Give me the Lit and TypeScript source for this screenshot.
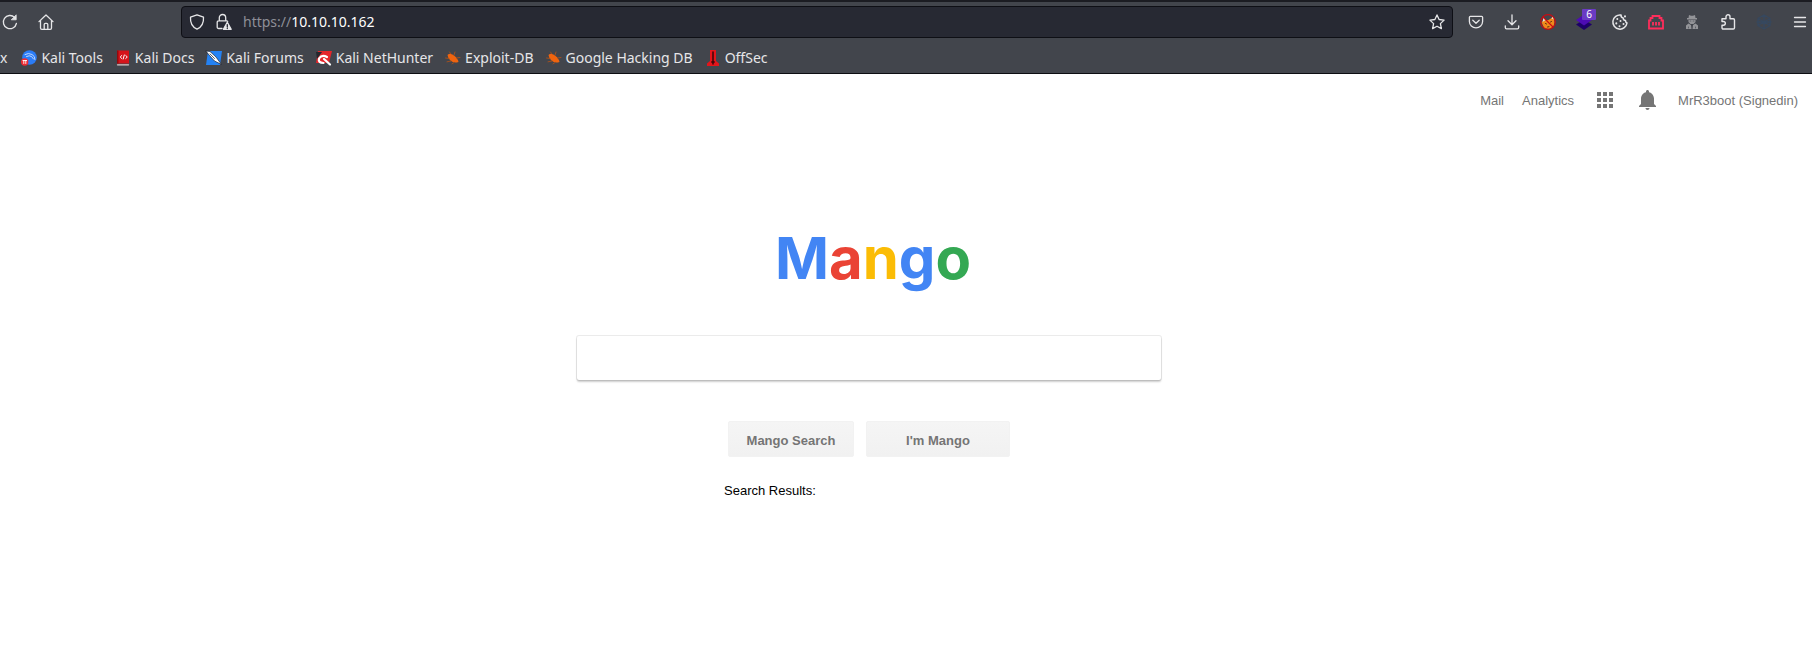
import { LitElement, html, css, svg } from "lit";
import { customElement } from "lit/decorators.js";

const icon = (body: unknown, size = 16) => html`
  <svg width=${size} height=${size} viewBox="0 0 16 16" fill="none" stroke="currentColor"
    stroke-width="1.3" stroke-linecap="round" stroke-linejoin="round" aria-hidden="true">${body}</svg>`;

const reload = svg`<path d="M12.600 3.400A6.600 6.600 0 1 0 14.400 9.500"/><path d="M14.200 1.200v4.600H9.600z" fill="currentColor" stroke-width=".8"/>`;
const home = svg`<path d="M1 7.6 8 1l7 6.6M2.5 6.4V14q0 1.300 1.300 1.300h8.400q1.300 0 1.300-1.300V6.400M6.200 15v-4.400q0-1.200 1.200-1.200h1.200q1.200 0 1.200 1.200V15"/>`;
const shield = svg`<path d="M8 .8 14.500 3.200c.4 5.600-1.600 9.600-6.500 12C3.100 12.800 1.100 8.800 1.500 3.200z"/>`;
const lock = svg`
  <path d="M3.300 6.800V3.700a3.200 3.200 0 0 1 6.400 0v3.100M6 14.500H2.700q-1.500 0-1.500-1.500V8.300q0-1.500 1.500-1.500h7.800q.8 0 1.200.5"/>
  <path d="M11.300 8.300 15.200 15.300H7.400z" fill="currentColor"/><path d="M11.300 10.600v2.200M11.300 14.200v.3" stroke="#272933"/>`;
const star = svg`<path d="m8 .9 2.100 4.600 5 .6-3.700 3.500 1 5L8 12.200 3.600 14.600l1-5L.9 6.100l5-.6z"/>`;
const pocket = svg`<path d="M2.400 2.300h11.200q1 0 1 1v4.200a6.600 6.300 0 0 1-13.200 0V3.300q0-1 1-1zM4.800 6.300 8 9.300l3.200-3"/>`;
const download = svg`<path d="M8 .8v9.700M4 6.700l4 4 4-4M1.300 11.800v1.700q0 1.300 1.300 1.300h10.800q1.300 0 1.300-1.300v-1.700"/>`;
const fox = svg`
  <path d="m1.500 8 3-1.500 4-.5 4.500-3 1.500 5-1 4.500-4 2.500-5-.5-1.500-3z" fill="#f08a1c" stroke="none"/>
  <path d="M3.500 3.500 6 6 2.500 8zM12.500 2.500l1.500 3-2.500-1z" fill="#f4e3cf" stroke="none"/>
  <path d="m5.500 9.500 1 .5M10.500 8l1-.5M7.500 13l1.500-.3" stroke="#5b2d12" stroke-width="1"/>
  <circle cx="8" cy="8" r="7.300" stroke="#c90b12" stroke-width="1.200"/><path d="m3 3 10 10" stroke="#c90b12" stroke-width="1.200"/>`;
const layers = svg`
  <path d="M0 10.500 8 5.500l8 5L8 16z" fill="#1d0069" stroke="none"/>
  <path d="M0 6 8 .5 16 6l-8 5.500z" fill="#4d0cb4" stroke="none"/>`;
const cookie = svg`
  <path d="M9 1A7.100 7.100 0 1 0 15 9M9 1q-.2 2.600 2.200 2.900-.1 2.500 2.300 2.700.1 1.900 1.500 2.400" stroke-width="1.500"/>
  <path d="M13 2.300v.1M5.300 5v.1M8.500 7v.1M4.300 9.300v.1M7.500 12.200v.1M11.500 10v.1" stroke-width="2"/>`;
const dome = svg`
  <path d="M1 14.500V6.500h1.500V4H4.500V2h7v2h2v2.500H15v8z" stroke="#ff2d5b" stroke-width="1.800" stroke-linejoin="miter"/>
  <path d="M5 8v3.500M8 8v3.500M11 8v3.500" stroke="#ff2d5b" stroke-width="1.800" stroke-linecap="butt"/>`;
const spy = svg`
  <g fill="#939498" stroke="none"><path d="M5 1l2 .8h2L11 1l.5 3H13v1.500H3V4h1.500z"/>
  <path d="M4.500 6h7v2L9.500 10h-3l-2-2zM4.500 9.500 7 11l.5 4H2v-3.500zM11.500 9.500 9 11l-.5 4H14v-3.500z"/></g>
  <path d="M6 7h.9M9.100 7h.9M4.500 13v1M11.500 13v1" stroke="#5a5c63" stroke-width=".9"/>`;
const puzzle = svg`<path d="M2 7.500V4.700h4V2.800a2 2 0 0 1 4 0v1.900h3.300q1.200 0 1.200 1.200v7.900q0 1.200-1.200 1.200H3.200Q2 15 2 13.800v-2.600h1.500a1.850 1.850 0 0 0 0-3.700z" stroke-width="1.400"/>`;
const globe = svg`
  <g stroke="#36485f"><path d="m8 1 6 3.500v7L8 15l-6-3.500v-7zM2 4.500l6 3.500 6-3.500M8 8v7M2 11.500 8 8l6 3.500M8 1v7M1 8h14"/></g>`;
const menu = svg`<path d="M2.500 3.500h11M2.500 8h11M2.500 12.500h11"/>`;

const tools = svg`
  <circle cx="8.500" cy="7.500" r="7.300" fill="#2b7cf6" stroke="none"/>
  <path d="M4 4.500q3.500-2 7 0 3 1.500 3 5M5.500 6.500q3-1.500 5 0l2 2.500" stroke="#cfe0ff" stroke-width=".9"/>
  <circle cx="3.700" cy="12" r="3.700" fill="#ee2b33" stroke="none"/><path d="M2.800 10.500v3M4.800 10.500v3M2 10.500h3.600" stroke="#fff" stroke-width=".9"/>`;
const docs = svg`
  <path d="M2 .5h12v13H2z" fill="#d5141b" stroke="none"/><path d="M2 .5h1.500v13H2z" fill="#96080d" stroke="none"/>
  <path d="M2.500 14.800h11" stroke="#dcc9c9"/><path d="M6.800 5.500 5.200 7l1.600 1.500M10.700 5.500 12.300 7l-1.600 1.500M9.300 5 8.200 9" stroke="#fff" stroke-width="1"/>`;
const forums = svg`
  <path d="M2 1h14l-2 14H0z" fill="#2482f4" stroke="none"/>
  <path d="m0 1 4 .5L10 7l5.500 7.500L8.500 11 4 6z" fill="#fff" stroke="#1c2230" stroke-width=".7"/><path d="m4 4 4.500 4.500" stroke="#303540" stroke-width=".8"/>`;
const nethunter = svg`
  <path d="M2 1h14l-3 12H0z" fill="#e5252a" stroke="none"/><path d="M0 2h6L1 9z" fill="#25272d" stroke="none"/>
  <path d="M11 7Q6 4 3 8.500q-1 4.500 4.500 4.500M8 9l6 5.500" stroke="#fff" stroke-width="2.200"/>`;
const bug = svg`
  <path d="M2.500 5Q5 2.500 9 5.500q4 3 4.500 6.500-5 1.500-8-1.500T2.500 5z" fill="#f0640f" stroke="none"/>
  <path d="m6 4-1.500-2M9 5l1-3M11.500 8l3.500-.5M4 8.500.5 8M6 11l-4 .8M9 12.500l-2 1.300" stroke="#a8501c" stroke-width=".9"/>`;
const tower = svg`
  <path d="M5 0h6v11l3 2.500V16H2v-2.500L5 11z" fill="#e3151b" stroke="none"/>
  <path d="M8 2v12M6.800 12h2.400" stroke="#3b0608" stroke-width="1.500"/>`;

const bookmarks: [unknown, string][] = [
  [tools, "Kali Tools"],
  [docs, "Kali Docs"],
  [forums, "Kali Forums"],
  [nethunter, "Kali NetHunter"],
  [bug, "Exploit-DB"],
  [bug, "Google Hacking DB"],
  [tower, "OffSec"],
];

@customElement("browser-chrome")
export class BrowserChrome extends LitElement {
  static styles = css`
    :host { display: block; background: #42454c; color: #e6e6e8; border-top: 2px solid #1b1c22;
      border-bottom: 1px solid #0c0d12; font: 14px/20px "Noto Sans", sans-serif; }
    button { all: unset; box-sizing: border-box; display: flex; align-items: center; justify-content: center; }
    svg { display: block; flex: none; overflow: visible; }
    .bar { display: flex; align-items: center; height: 40px; }
    .nav { display: flex; gap: 20px; flex: 1 1 181px; max-width: 181px; padding-left: 2px; box-sizing: border-box; }
    .address { flex: 1; display: flex; align-items: center; height: 32px; box-sizing: border-box;
      padding: 0 7px; background: #272933; border: 1px solid #0e0f15; border-radius: 4px; }
    .trust { display: flex; gap: 11px; margin-right: 11px; }
    .url { flex: 1; display: flex; }
    .url input { all: unset; width: 100%; height: 20px; color: #fff; }
    .scheme { color: #8e8f97; }
    .actions { display: flex; margin-left: 5px; }
    .actions button { width: 36px; height: 36px; position: relative; }
    .actions button:last-child { width: 30px; padding-left: 6px; }
    .badge { position: absolute; top: 5px; right: 6px; width: 14px; height: 11px; border-radius: 1px;
      background: #6a3bc4; color: #fff; font-size: 10px; line-height: 11px; text-align: center; }
    .marks { display: flex; gap: 12px; height: 31px; align-items: center; }
    .marks a { display: flex; align-items: center; gap: 4px; color: inherit; text-decoration: none; white-space: nowrap; }
    .marks .cut { padding-right: 2px; }
  `;
  render() {
    const actions: [string, unknown][] = [
      ["Pocket", pocket], ["Downloads", download], ["Fox", fox], ["Layers", layers], ["Cookies", cookie],
      ["Dome", dome], ["Agent", spy], ["Extensions", puzzle], ["Network", globe], ["Menu", menu],
    ];
    return html`
      <div class="bar">
        <div class="nav">
          <button aria-label="Reload">${icon(reload)}</button>
          <button aria-label="Home">${icon(home)}</button>
        </div>
        <div class="address">
          <span class="trust">${icon(shield)} ${icon(lock)}</span>
          <label class="url"><span class="scheme">https://</span><input aria-label="Address" value="10.10.10.162" /></label>
          <button aria-label="Bookmark this page">${icon(star)}</button>
        </div>
        <div class="actions">
          ${actions.map(([name, glyph]) => html`<button aria-label=${name}>${icon(glyph)}
            ${name === "Layers" ? html`<span class="badge">6</span>` : ""}</button>`)}
        </div>
      </div>
      <nav class="marks">
        <a class="cut" href="#">x</a>
        ${bookmarks.map(([glyph, name]) => html`<a href="#">${icon(glyph)}<span>${name}</span></a>`)}
      </nav>`;
  }
}

@customElement("mango-page")
export class MangoPage extends LitElement {
  static styles = css`
    :host { display: block; font: 13px/16px "Liberation Sans", Arial, sans-serif; }
    .top { display: flex; justify-content: flex-end; align-items: center; height: 52px; padding-right: 14px; color: #757575; }
    .top a { color: inherit; text-decoration: none; }
    .top .text { padding-top: 2px; }
    .top svg { display: block; }
    .links { display: flex; gap: 18px; margin-right: 19px; }
    .apps { margin-right: 19px; }
    .bell { margin-right: 18px; }
    .main { display: flex; flex-direction: column; align-items: center; padding: 92px 74px 0 0; }
    .logo { margin: 0; padding-left: 8px; font: 700 58px/80px Inter, sans-serif; }
    .blue { color: #4285f4; } .red { color: #ea4335; } .yellow { color: #fbbc05; } .green { color: #34a853; }
    .search { display: flex; flex-direction: column; align-items: center; width: 100%; margin-top: 38px; }
    .search input { box-sizing: border-box; width: 100%; max-width: 584px; height: 44px; padding: 0 12px; border: 0; outline: 0;
      border-radius: 2px; font: inherit; background: #fff;
      box-shadow: 0 2px 2px 0 rgba(0,0,0,.2), 0 0 0 1px rgba(0,0,0,.08); }
    .buttons { display: flex; gap: 12px; margin-top: 41px; }
    .buttons button { min-width: 126px; height: 36px; padding: 3px 0 0; border: 1px solid #f2f2f2; border-radius: 2px; color: #757575;
      background: linear-gradient(#f5f5f5, #f1f1f1); font: bold 13px/16px "Liberation Sans", Arial, sans-serif; }
    .buttons .lucky { min-width: 144px; }
    .results { width: 290px; margin: 26px 0 0; color: #000; }
  `;
  render() {
    return html`
      <header class="top">
        <nav class="links text"><a href="#">Mail</a><a href="#">Analytics</a></nav>
        <a class="apps" href="#" aria-label="Apps"><svg width="24" height="24" viewBox="0 0 24 24" fill="#757575">
          <path d="M4 8h4V4H4v4zm6 12h4v-4h-4v4zm-6 0h4v-4H4v4zm0-6h4v-4H4v4zm6 0h4v-4h-4v4zm6-10v4h4V4h-4zm-6 4h4V4h-4v4zm6 6h4v-4h-4v4zm0 6h4v-4h-4v4z"/></svg></a>
        <a class="bell" href="#" aria-label="Notifications"><svg width="24" height="24" viewBox="0 0 24 24" fill="#757575">
          <path d="M11.500 22c1.100 0 2-.9 2-2h-4c0 1.100.9 2 2 2zm6.500-6v-5.500c0-3.070-2.130-5.640-5-6.320V3.500c0-.83-.67-1.500-1.500-1.500S10 2.670 10 3.500v.68c-2.870.68-5 3.250-5 6.320V16l-2 2v1h17v-1l-2-2z"/></svg></a>
        <a class="text" href="#">MrR3boot (Signedin)</a>
      </header>
      <main class="main">
        <h1 class="logo"><span class="blue">M</span><span class="red">a</span><span class="yellow">n</span><span class="blue">g</span><span class="green">o</span></h1>
        <form class="search" @submit=${(e: Event) => e.preventDefault()}>
          <input type="text" aria-label="Search" />
          <div class="buttons"><button>Mango Search</button><button class="lucky" type="button">I'm Mango</button></div>
        </form>
        <p class="results">Search Results:</p>
      </main>`;
  }
}

@customElement("app-root")
export class AppRoot extends LitElement {
  static styles = css`:host { display: block; min-height: 100vh; background: #fff; overflow: hidden; }`;
  render() {
    return html`<browser-chrome></browser-chrome><mango-page></mango-page>`;
  }
}
